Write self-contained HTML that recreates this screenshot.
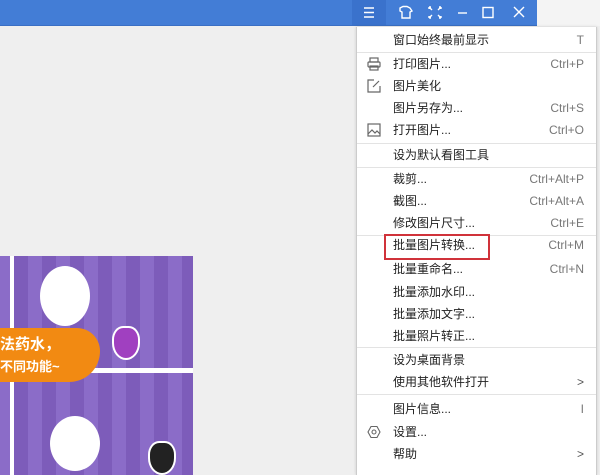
<!DOCTYPE html><html><head><meta charset="utf-8"><style>
body{margin:0;width:600px;height:475px;overflow:hidden;background:#efefef;position:relative;font-family:"Liberation Sans","Noto Sans CJK SC",sans-serif;}
.bar{position:absolute;left:0;top:0;width:537px;height:25px;background:#437dd6;border-bottom:1px solid #3a6fc4}
.rt{position:absolute;left:537px;top:0;width:63px;height:26px;background:#f4f4f4}
.menu{position:absolute;left:356px;top:27px;width:239px;height:448px;background:#fff;border-left:1px solid #ccc;border-right:1px solid #ccc;box-shadow:0 0 3px rgba(0,0,0,.15)}
.r{position:absolute;left:36px;right:12px;height:22px;line-height:22px;font-size:12px;color:#222}
.r span{position:absolute;right:0;color:#777}
.s{position:absolute;left:0;right:0;height:1px;background:#e3e3e3}
.ic{position:absolute;left:10px;width:14px;height:14px}
.img{position:absolute;left:0;top:256px;width:193px;height:219px;background:repeating-linear-gradient(90deg,#8b6cc8 0 14px,#7d5cba 14px 28px)}
</style></head><body>
<div class="bar"><svg style="position:absolute;left:352px;top:0" width="185" height="25" stroke="#fff" fill="none" stroke-width="1.4">
<rect x="0" y="0" width="34" height="25" fill="#3a72cc" stroke="none"/>
<path d="M12 8h10M12 12.5h10M12 17h10"/>
<path d="M48 8l3-1.5h4l3 1.5 2 3-2 1v6h-8v-6l-2-1z"/>
<path d="M77 7l3 3M89 7l-3 3M77 18l3-3M89 18l-3-3M77 7h2M77 7v2M89 7h-2M89 7v2M77 18h2M77 18v-2M89 18h-2M89 18v-2"/>
<path d="M106 13h9"/>
<rect x="131" y="7.5" width="10" height="10"/>
<path d="M162 7l10 10M172 7l-10 10"/></svg></div>
<div class="rt"></div>
<div class="img">
<div style="position:absolute;left:10px;top:0;width:4px;height:219px;background:#fff"></div>
<div style="position:absolute;left:10px;top:112px;width:183px;height:5px;background:#fff"></div>
<div style="position:absolute;left:40px;top:10px;width:50px;height:60px;border-radius:50%;background:#fff"></div>
<div style="position:absolute;left:50px;top:160px;width:50px;height:55px;border-radius:50%;background:#fff"></div>
<div style="position:absolute;left:112px;top:70px;width:24px;height:30px;border-radius:40% 40% 50% 50%;background:#a040c0;border:2px solid #fff"></div>
<div style="position:absolute;left:148px;top:185px;width:24px;height:30px;border-radius:40% 40% 50% 50%;background:#222;border:2px solid #fff"></div>
<div style="position:absolute;left:0;top:72px;width:100px;height:54px;background:#f28a12;border-radius:0 30px 40px 0;color:#fff;font-weight:bold;font-size:15px;line-height:22px;padding-top:6px;box-sizing:border-box">法药水，<br><span style="font-size:13px">不同功能~</span></div>
</div>
<div class="menu">
<div class="r" style="top:2px">窗口始终最前显示<span>T</span></div>
<div class="s" style="top:25px"></div>
<svg class="ic" style="top:30px" viewBox="0 0 14 14" fill="none" stroke="#666" stroke-width="1.2"><rect x="3" y="1" width="8" height="4"/><rect x="1" y="5" width="12" height="5" rx="1"/><rect x="3" y="9" width="8" height="4"/></svg>
<div class="r" style="top:26px">打印图片...<span>Ctrl+P</span></div>
<svg class="ic" style="top:52px" viewBox="0 0 14 14" fill="none" stroke="#666" stroke-width="1.2"><path d="M7 1H1v12h12V7M6 8l6-6"/></svg>
<div class="r" style="top:48px">图片美化</div>
<div class="r" style="top:70px">图片另存为...<span>Ctrl+S</span></div>
<svg class="ic" style="top:96px" viewBox="0 0 14 14" fill="none" stroke="#666" stroke-width="1.2"><rect x="1" y="1" width="12" height="12"/><path d="M1 11l4-4 3 3 2-2 3 3"/></svg>
<div class="r" style="top:92px">打开图片...<span>Ctrl+O</span></div>
<div class="s" style="top:116px"></div>
<div class="r" style="top:117px">设为默认看图工具</div>
<div class="s" style="top:140px"></div>
<div class="r" style="top:141px">裁剪...<span>Ctrl+Alt+P</span></div>
<div class="r" style="top:163px">截图...<span>Ctrl+Alt+A</span></div>
<div class="r" style="top:185px">修改图片尺寸...<span>Ctrl+E</span></div>
<div class="s" style="top:208px"></div>
<div class="r" style="top:207px">批量图片转换...<span>Ctrl+M</span></div>
<div style="position:absolute;left:27px;top:207px;width:106px;height:26px;border:2px solid #d0323a;box-sizing:border-box"></div>
<div class="r" style="top:231px">批量重命名...<span>Ctrl+N</span></div>
<div class="r" style="top:254px">批量添加水印...</div>
<div class="r" style="top:276px">批量添加文字...</div>
<div class="r" style="top:298px">批量照片转正...</div>
<div class="s" style="top:320px"></div>
<div class="r" style="top:322px">设为桌面背景</div>
<div class="r" style="top:344px">使用其他软件打开<span style="color:#555">&gt;</span></div>
<div class="s" style="top:367px"></div>
<div class="r" style="top:371px">图片信息...<span>I</span></div>
<svg class="ic" style="top:398px" viewBox="0 0 14 14" fill="none" stroke="#666" stroke-width="1.1"><path d="M4 1.5h6L13 7l-3 5.5H4L1 7z"/><circle cx="7" cy="7" r="2"/></svg>
<div class="r" style="top:394px">设置...</div>
<div class="r" style="top:416px">帮助<span style="color:#555">&gt;</span></div>
</div>
</body></html>
